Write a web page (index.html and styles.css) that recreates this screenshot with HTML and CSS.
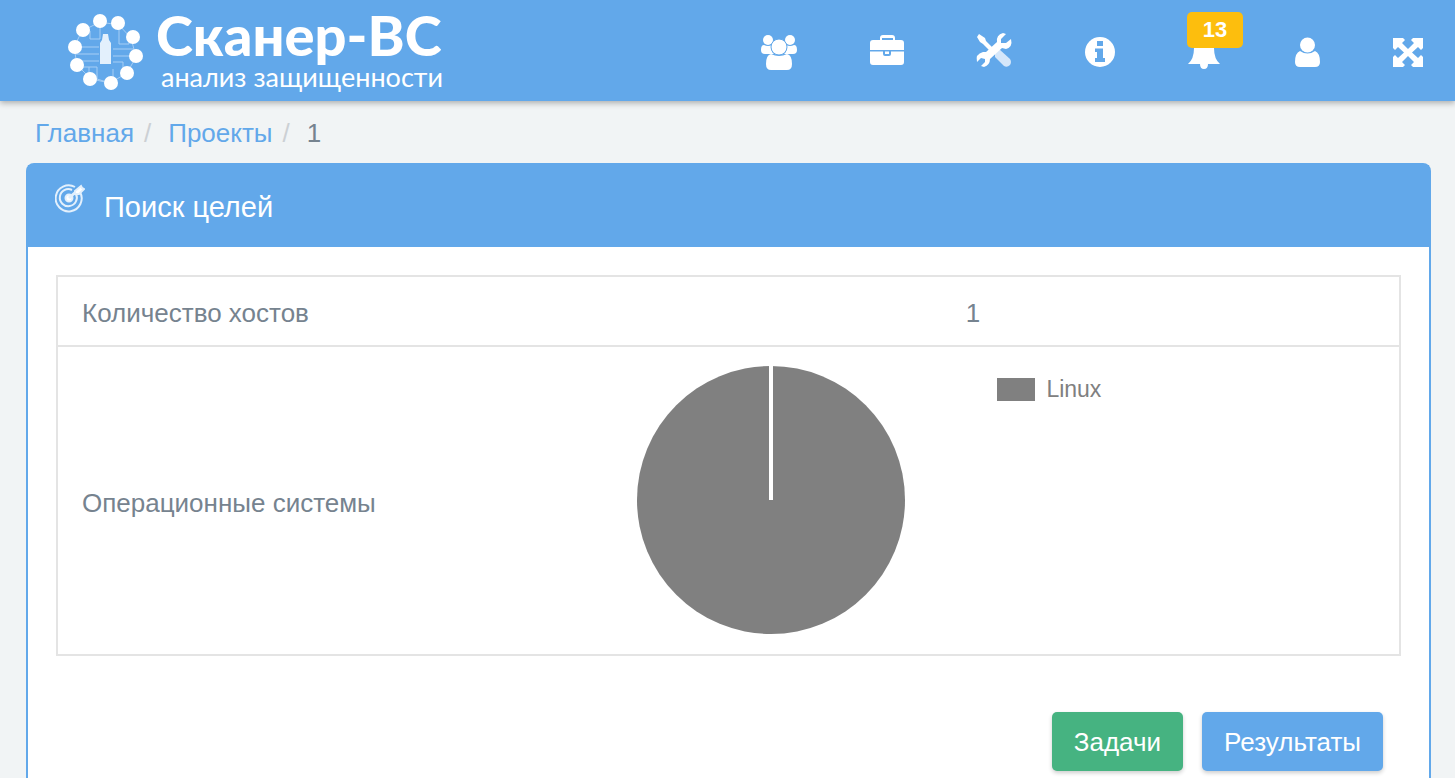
FILE: index.html
```html
<!DOCTYPE html>
<html lang="ru">
<head>
<meta charset="utf-8">
<title>Сканер-ВС</title>
<link rel="stylesheet" href="styles.css">
</head>
<body>
<header class="topbar">
  <a class="brand" href="#">
    <svg class="brand-mark" viewBox="0 0 78 78" aria-hidden="true">
      <g class="traces">
        <path d="M33 9V26H23V18H15M52 12V31H62V24M7 34H32M9 41H32M9 48H32M46 36H66M46 43H68M46 49H56V61M46 56V70H43M12 54H30V66M22 65V54M30 66L43 70M24 66L43 70L60 60L69 44L64 25L52 12L33 9L15 18L7 34L10 52Z"/>
      </g>
      <path class="core" d="M35 27L36 21H41L42 27L44 30V51H33V30Z"/>
      <g class="dots">
        <circle cx="33" cy="8" r="7"/><circle cx="51" cy="10" r="7"/><circle cx="66" cy="24" r="7"/><circle cx="69" cy="43" r="7"/><circle cx="60" cy="60" r="7"/><circle cx="44" cy="70" r="7"/><circle cx="23" cy="66" r="7"/><circle cx="10" cy="52" r="7"/><circle cx="8" cy="34" r="7"/><circle cx="16" cy="17" r="7"/>
      </g>
    </svg>
    <span class="brand-text">
      <span class="brand-name">Сканер-ВС</span>
      <span class="brand-sub">анализ защищенности</span>
    </span>
  </a>
  <nav class="nav" aria-label="Меню">
    <a href="#" aria-label="Пользователи"><svg width="36" height="36" viewBox="0 0 36 36"><circle cx="7" cy="6" r="5"/><circle cx="29" cy="6" r="5"/><path d="M3 11Q7 13 11 11Q9 17 13 20H4Q0 20 0 16Q0 11 3 11ZM33 11Q29 13 25 11Q27 17 23 20H32Q36 20 36 16Q36 11 33 11Z"/><path d="M10 20Q18 24 26 20Q31 21 31 30Q31 36 26 36H10Q5 36 5 30Q5 21 10 20Z"/><circle class="cut" cx="18" cy="13" r="8"/></svg></a>
    <a href="#" aria-label="Проекты"><svg width="34" height="36" viewBox="0 0 34 36"><path d="M10 6V4Q10 1 13 1H22Q25 1 25 4V6H31Q34 6 34 9V16H0V9Q0 6 3 6ZM12 6H23V4H12Z" fill-rule="evenodd"/><path d="M0 17.500H13V20Q13 22 15 22H19Q21 22 21 20V17.500H34V28Q34 31 31 31H3Q0 31 0 28ZM15 17.500H19V20H15Z"/></svg></a>
    <a href="#" aria-label="Инструменты"><svg width="35" height="36" viewBox="0 0 35 36"><path class="soft" d="M18 19L22 15L33 25Q35 28 33 31Q30 34 27 32L18 23Z"/><path d="M2 0L8 4L9 7L18 16L15 19L6 10L3 8L0 3Z"/><path d="M29 0L24 5V9L29 9L34 5Q36 13 29 15L25 14L13 25Q13 31 7 33L4 32L8 28V25L4 24L0 28Q-2 20 6 18L9 18L20 8Q19 1 26 -1Z"/></svg></a>
    <a href="#" aria-label="Информация"><svg width="30" height="36" viewBox="0 0 30 36"><circle cx="15" cy="18" r="15"/><path class="hole" d="M12 7H18V12H12ZM10 14.500H18V24H20V28H10V24H12V18H10Z"/></svg></a>
    <a class="bell" href="#" aria-label="Уведомления: 13"><svg width="32" height="36" viewBox="0 0 32 36"><path d="M14 3Q16 0 18 3Q26 5 26 14Q26 25 32 30H20Q20 35 16 35Q12 35 12 30H0Q6 25 6 14Q6 5 14 3Z"/></svg><span class="badge">13</span></a>
    <a href="#" aria-label="Профиль"><svg width="25" height="36" viewBox="0 0 25 36"><circle cx="12.500" cy="11" r="7.500"/><path d="M5 17Q12.500 22 20 17Q25 19 25 28Q25 33 20 33H5Q0 33 0 28Q0 19 5 17Z"/></svg></a>
    <a href="#" aria-label="Во весь экран"><svg width="30" height="36" viewBox="0 0 30 36"><path d="M0 4H10L12 6L9 9L15 15L21 9L18 6L20 4H30V14L28 16L25 13L19 18.500L25 24L28 21L30 23V33H20L18 31L21 28L15 22L9 28L12 31L10 33H0V23L2 21L5 24L11 18.500L5 13L2 16L0 14Z"/></svg></a>
  </nav>
</header>
<nav aria-label="Навигация">
  <ol class="crumbs">
    <li><a href="#">Главная</a></li>
    <li><a href="#">Проекты</a></li>
    <li>1</li>
  </ol>
</nav>
<main class="panel">
  <div class="panel-head">
    <svg class="target" viewBox="0 0 30 30" aria-hidden="true"><path d="M25 9A13 13 0 1 1 20 4"/><path d="M21 11A8.500 8.500 0 1 1 17 7"/><circle class="bull" cx="14" cy="15" r="3.500"/><path d="M14 15L23 7" stroke-width="3"/><path class="tip" d="M20 8L26 3L27 5L29 6L24 11L20 11Z"/></svg>
    <h1>Поиск целей</h1>
  </div>
  <div class="panel-body">
    <table class="info">
      <tr><th scope="row">Количество хостов</th><td class="count">1</td></tr>
      <tr>
        <th scope="row">Операционные системы</th>
        <td class="chart-cell">
          <div class="chart">
            <svg class="pie" viewBox="0 0 268 268" role="img" aria-label="Linux"><circle cx="134" cy="134" r="134"/><path d="M134 0V134"/></svg>
            <div class="legend"><span class="swatch"></span>Linux</div>
          </div>
        </td>
      </tr>
    </table>
    <div class="actions">
      <button class="btn green" type="button">Задачи</button>
      <button class="btn" type="button">Результаты</button>
    </div>
  </div>
</main>
</body>
</html>
```
FILE: styles.css
```css
* { box-sizing: border-box; }
body {
  margin: 0;
  min-height: 100vh;
  display: flex;
  flex-direction: column;
  background: #f1f4f5;
  color: #76838f;
  font: 26px/36px "Liberation Sans", Arial, sans-serif;
}
a { color: #62a8ea; text-decoration: none; }
.topbar {
  display: flex;
  justify-content: space-between;
  height: 101px;
  padding: 0 32px 0 67px;
  background: #62a8ea;
  box-shadow: 0 2px 6px rgba(0, 0, 0, .3);
}
.brand { display: flex; gap: 11px; padding-top: 13px; color: #fff; }
.brand-mark { width: 78px; height: 78px; }
.traces { fill: none; stroke: #a6cef5; stroke-width: 1; }
.core { fill: #e3f0fc; }
.dots { fill: #fff; }
.brand-text { display: flex; flex-direction: column; }
.brand-name { font: 900 56px/44px Lato, sans-serif; }
.brand-sub { padding-left: 5px; font: 27px/40px Lato, sans-serif; }
.nav { display: flex; align-items: flex-start; gap: 73px; padding-top: 34px; }
.nav a { display: block; height: 36px; }
.nav svg { display: block; fill: #fff; overflow: visible; }
.nav .cut { stroke: #62a8ea; stroke-width: 1; }
.nav .soft { fill: #d5e7fa; }
.nav .hole { fill: #62a8ea; }
.nav .bell { position: relative; width: 34px; }
.badge {
  position: absolute;
  left: -1px;
  top: -22px;
  width: 56px;
  border-radius: 5px;
  background: #fdbe0d;
  color: #fff;
  font: bold 22px/36px "Liberation Sans", Arial, sans-serif;
  text-align: center;
}
.crumbs { display: flex; margin: 0; padding: 14px 35px 12px; list-style: none; }
.crumbs li + li::before { content: "/"; padding: 0 17px 0 10px; color: #ccd0d4; }
.panel {
  flex: 1;
  margin: 0 24px 0 26px;
  border: 2px solid #62a8ea;
  border-bottom: 0;
  border-radius: 8px 8px 0 0;
  background: #fff;
}
.panel-head {
  display: flex;
  align-items: flex-start;
  gap: 19px;
  padding: 18px 27px 22px;
  background: #62a8ea;
  color: #fff;
}
.panel-head h1 { margin: 6px 0 0; font-size: 29px; line-height: 36px; font-weight: 400; }
.target { width: 30px; height: 30px; fill: none; stroke: #e3f0fc; stroke-width: 2; }
.target .bull, .target .tip { fill: #fff; }
.panel-body { padding: 28px 28px 7px; }
.info { width: 100%; table-layout: fixed; border-collapse: collapse; border: 2px solid #e4e4e4; }
.info tr + tr { border-top: 2px solid #e4e4e4; }
.info th { width: 36.5%; padding: 18px 24px 14px; font-weight: 400; text-align: left; }
.info td { padding: 18px 0 14px; text-align: center; }
.info .chart-cell { padding: 19px 0 20px; }
.chart { display: grid; grid-template-columns: 52.5% 1fr; }
.pie { width: 268px; height: 268px; justify-self: center; fill: #808080; stroke: #fff; stroke-width: 4; }
.pie circle { stroke: none; }
.legend { display: flex; align-items: center; align-self: start; gap: 11px; margin: 5px 0 0 3px; font-size: 23px; color: #808080; }
.swatch { width: 38px; height: 23px; background: #808080; }
.actions { display: flex; justify-content: flex-end; gap: 19px; padding: 56px 18px 0 0; }
.btn {
  padding: 12px 22px 11px;
  border: 0;
  border-radius: 5px;
  background: #62a8ea;
  box-shadow: 0 2px 4px rgba(0, 0, 0, .2);
  color: #fff;
  font: 26px/36px "Liberation Sans", Arial, sans-serif;
}
.btn.green { background: #46b381; }
```
